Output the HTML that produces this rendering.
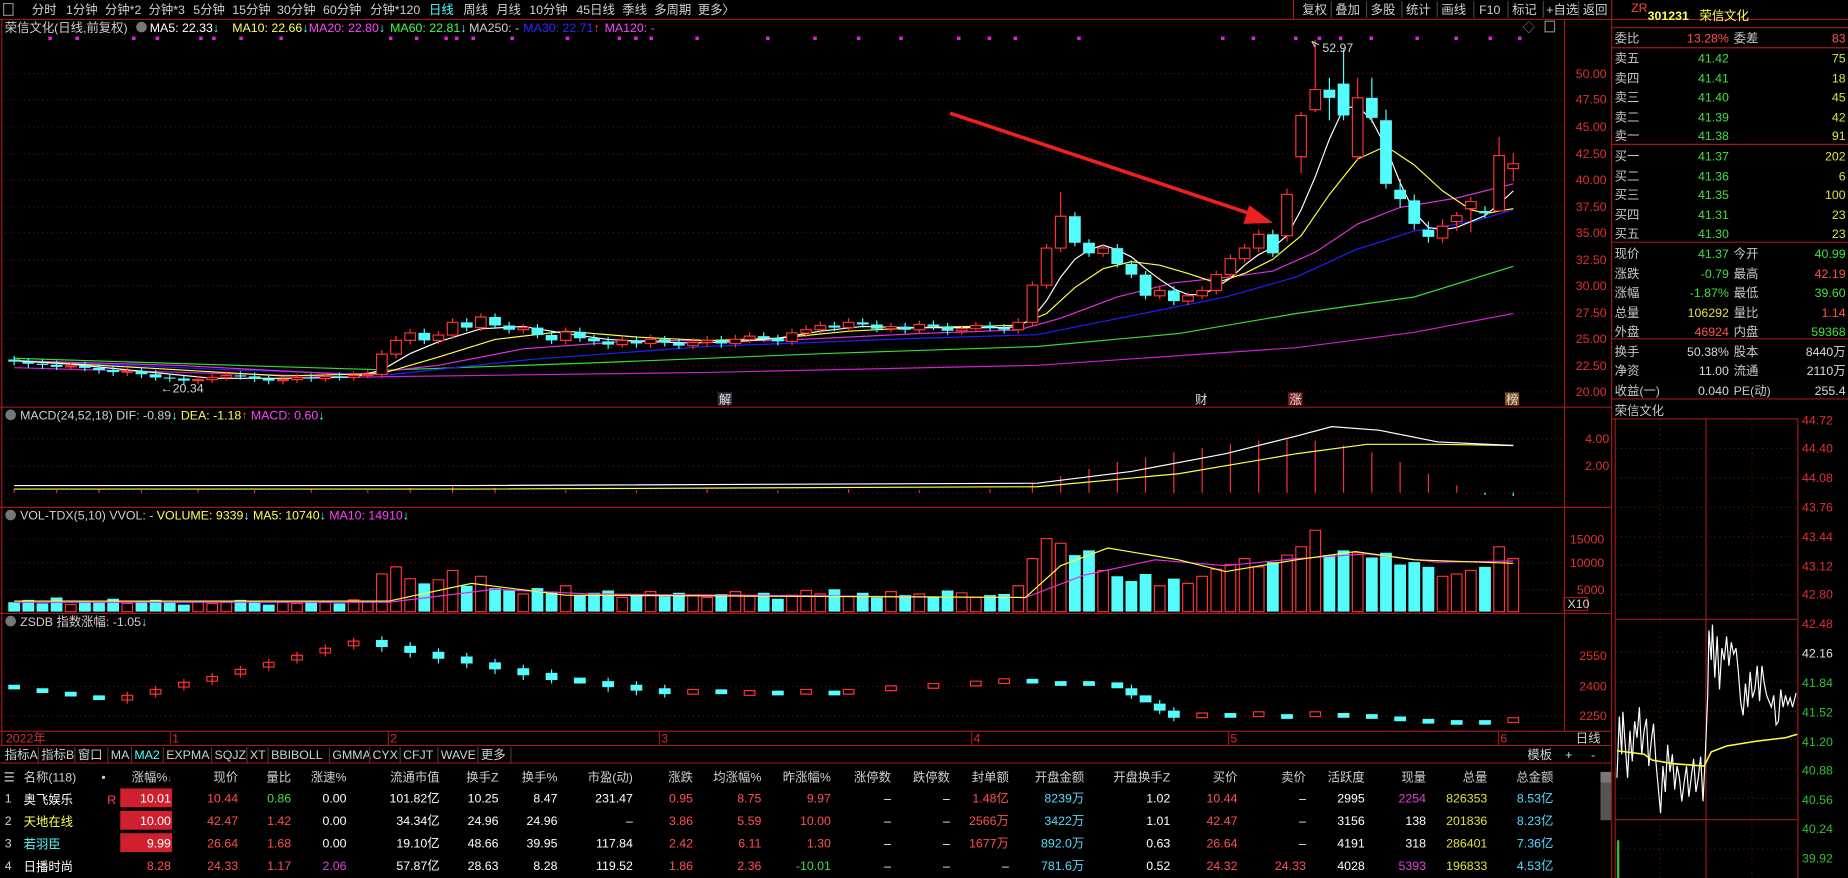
<!DOCTYPE html>
<html><head><meta charset="utf-8"><style>
html,body{margin:0;padding:0;background:#000;overflow:hidden}
svg{display:block}
text{font-family:"Liberation Sans","Noto Sans CJK SC",sans-serif;font-size:10.5px}
</style></head><body>
<svg width="1848" height="878" viewBox="0 0 1568 745" xmlns="http://www.w3.org/2000/svg">
<rect width="1568" height="745" fill="#000"/>
<!-- grids -->
<g stroke="#501010" stroke-dasharray="1,3">
<path d="M4 62.5H1326M4 84.5H1326M4 107.5H1326M4 130.5H1326M4 152.5H1326M4 175.5H1326M4 197.5H1326M4 220.5H1326M4 242.5H1326M4 265.5H1326M4 287.5H1326M4 310.5H1326M4 332.5H1326M4 372.5H1326M4 395.5H1326M4 418.5H1326M4 457.5H1326M4 477.5H1326M4 500.5H1326M4 556.5H1326M4 582.5H1326M4 607.5H1326"/>
<path d="M1371 380.5H1525M1371 405.5H1525M1371 430.5H1525M1371 455.5H1525M1371 479.5H1525M1371 504.5H1525M1371 553.5H1525M1371 578.5H1525M1371 603.5H1525M1371 627.5H1525M1371 652.5H1525M1371 677.5H1525M1371 720.5H1525M1408.5 356V745M1486.5 356V745"/>
</g>
<!-- frame lines -->
<g stroke="#a01818" stroke-width="1" fill="none">
<line x1="0" y1="16.5" x2="1568" y2="16.5"/>
<line x1="1.5" y1="17" x2="1.5" y2="632"/>
<line x1="0" y1="345.5" x2="1367" y2="345.5"/>
<line x1="0" y1="430.5" x2="1367" y2="430.5"/>
<line x1="0" y1="520.5" x2="1367" y2="520.5"/>
<line x1="0" y1="620.5" x2="1367" y2="620.5"/>
<line x1="0" y1="632.5" x2="1367" y2="632.5"/>
<line x1="0" y1="647.5" x2="1367" y2="647.5"/>
<line x1="1327.5" y1="17" x2="1327.5" y2="620"/>
<line x1="1367.5" y1="0" x2="1367.5" y2="745"/>
<line x1="1368" y1="23.5" x2="1568" y2="23.5"/>
<line x1="1368" y1="40.5" x2="1568" y2="40.5"/>
<line x1="1368" y1="122.5" x2="1568" y2="122.5"/>
<line x1="1368" y1="205.5" x2="1568" y2="205.5"/>
<line x1="1368" y1="287.5" x2="1568" y2="287.5"/>
<line x1="1368" y1="338.5" x2="1568" y2="338.5"/>
<line x1="1368" y1="355.5" x2="1525" y2="355.5"/>
<line x1="1370.5" y1="355" x2="1370.5" y2="745"/>
<line x1="1525.5" y1="355" x2="1525.5" y2="745"/>
<line x1="1447.5" y1="355" x2="1447.5" y2="745"/>
<line x1="1370" y1="525.5" x2="1525" y2="525.5"/>
<line x1="1370" y1="695.5" x2="1525" y2="695.5"/>
<line x1="1097.5" y1="0" x2="1097.5" y2="16"/>
</g>
<!-- magenta dots -->
<g fill="#e020e0"><rect x="41" y="31" width="3" height="3"/><rect x="64" y="31" width="3" height="3"/><rect x="112" y="31" width="3" height="3"/><rect x="132" y="31" width="3" height="3"/><rect x="169" y="31" width="3" height="3"/><rect x="180" y="31" width="3" height="3"/><rect x="203" y="31" width="3" height="3"/><rect x="237" y="31" width="3" height="3"/><rect x="330" y="31" width="3" height="3"/><rect x="352" y="31" width="3" height="3"/><rect x="377" y="31" width="3" height="3"/><rect x="386" y="31" width="3" height="3"/><rect x="400" y="31" width="3" height="3"/><rect x="433" y="31" width="3" height="3"/><rect x="480" y="31" width="3" height="3"/><rect x="524" y="31" width="3" height="3"/><rect x="538" y="31" width="3" height="3"/><rect x="551" y="31" width="3" height="3"/><rect x="590" y="31" width="3" height="3"/><rect x="650" y="31" width="3" height="3"/><rect x="690" y="31" width="3" height="3"/><rect x="727" y="31" width="3" height="3"/><rect x="763" y="31" width="3" height="3"/><rect x="812" y="31" width="3" height="3"/><rect x="838" y="31" width="3" height="3"/><rect x="860" y="31" width="3" height="3"/><rect x="914" y="31" width="3" height="3"/><rect x="1036" y="31" width="3" height="3"/><rect x="1062" y="31" width="3" height="3"/><rect x="1098" y="31" width="3" height="3"/><rect x="1118" y="31" width="3" height="3"/><rect x="1136" y="31" width="3" height="3"/><rect x="1162" y="31" width="3" height="3"/><rect x="1201" y="31" width="3" height="3"/><rect x="1234" y="31" width="3" height="3"/><rect x="1263" y="31" width="3" height="3"/><rect x="1288" y="31" width="3" height="3"/></g>
<!-- MA lines -->
<g fill="none" stroke-width="1">
<polyline stroke="#d020d0" points="12,312 300,320 600,316 880,310 1100,295 1200,282 1284,266"/>
<polyline stroke="#30e030" points="12,304 200,310 330,314 500,308 700,300 880,294 1000,283 1100,266 1200,252 1284,226"/>
<polyline stroke="#2020ff" points="12,306 200,314 330,318 450,305 600,294 780,287 880,284 960,268 1040,252 1100,235 1150,212 1200,196 1250,188 1284,178"/>
<polyline stroke="#e030e0" points="12,306 150,310 300,318 372,310 444,296 540,289 660,289 780,283 864,280 900,270 948,252 996,240 1044,235 1080,230 1116,214 1152,190 1188,176 1236,168 1284,156"/>
<polyline stroke="#ffff40" points="12,306 120,312 240,319 324,317 372,303 420,288 480,281 540,286 600,289 660,287 720,281 780,278 864,276 888,266 912,244 936,228 960,222 984,225 1008,232 1032,240 1056,232 1080,220 1104,200 1128,165 1152,135 1176,124 1200,140 1224,162 1248,178 1262,181 1284,177"/>
<polyline stroke="#ffffff" points="12,306 60,309 120,315 180,321 240,321 300,320 324,314 348,300 372,290 408,279 444,277 480,283 516,288 552,290 588,291 624,290 660,287 696,281 732,277 768,278 804,278 852,278 864,277 876,270 888,255 900,235 912,220 924,212 936,208 948,212 960,218 972,228 984,237 996,245 1008,250 1020,250 1032,244 1044,236 1056,225 1068,216 1080,210 1092,200 1104,178 1116,150 1128,118 1140,92 1152,90 1164,102 1176,125 1188,155 1200,180 1212,193 1224,195 1236,193 1248,188 1260,183 1272,173 1284,162"/>
</g>
<!-- candle wicks -->
<path stroke="#ff3232" fill="none" d="M60 307V314M108 312V319M168 319V326M180 317V325M192 315V323M240 319V326M252 317V325M276 316V324M300 315V323M312 314V321M324 297V321M336 285V304M348 279V292M372 281V292M384 270V287M408 266V281M444 275V283M480 278V292M528 285V295M552 284V295M588 287V296M600 285V294M624 284V295M636 282V291M672 279V293M684 276V286M696 273V283M720 270V281M756 274V282M780 272V283M816 276V284M828 273V282M864 270V283M876 239V277M888 207V245M900 163V214M936 207V218M984 243V254M1008 248V259M1020 243V254M1032 230V250M1044 216V236M1056 207V223M1068 195V214M1092 160V205M1104 95V147M1116 34V95M1152 66V136M1224 186V206M1236 180V196M1248 167V197M1272 116V180M1284 130V154"/>
<path stroke="#54fcfc" fill="none" d="M12 302V310M24 304V312M36 305V313M48 306V314M72 307V315M84 309V317M96 311V319M120 312V321M132 314V323M144 317V324M156 318V326M204 315V322M216 316V324M228 318V326M264 317V324M288 316V323M360 279V292M396 270V281M420 266V279M432 273V283M456 275V287M468 281V292M492 278V290M504 284V293M516 286V296M540 285V295M564 285V294M576 287V296M612 285V295M648 282V290M660 284V293M708 273V281M732 270V278M744 272V282M768 274V283M792 272V280M804 274V284M840 273V281M852 275V283M912 180V209M924 203V218M948 207V227M960 221V236M972 230V254M996 243V259M1080 195V218M1128 66V102M1140 42V102M1164 66V104M1176 93V160M1188 152V176M1200 165V195M1212 188V206M1260 175V185"/>
<!-- candle bodies -->
<path stroke="#ff3232" fill="#000" d="M55.5 310.4h9V311.3h-9ZM103.5 314.9h9V315.8h-9ZM163.5 322.1h9V323h-9ZM175.5 320.3h9V322.1h-9ZM187.5 318.5h9V320.3h-9ZM235.5 322.1h9V323h-9ZM247.5 320.3h9V322.1h-9ZM271.5 319.4h9V321.2h-9ZM295.5 318.5h9V320.3h-9ZM307.5 317.6h9V318.5h-9ZM319.5 300.5h9V317.6h-9ZM331.5 288.8h9V300.5h-9ZM343.5 282.5h9V288.8h-9ZM367.5 284.3h9V288.8h-9ZM379.5 273.5h9V284.3h-9ZM403.5 269h9V278h-9ZM439.5 278h9V279.8h-9ZM475.5 281.6h9V288.8h-9ZM523.5 288.8h9V292.4h-9ZM547.5 287.9h9V291.5h-9ZM583.5 290.6h9V293.3h-9ZM595.5 288.8h9V290.6h-9ZM619.5 287.9h9V291.5h-9ZM631.5 285.2h9V287.9h-9ZM667.5 282.5h9V289.7h-9ZM679.5 279.8h9V282.5h-9ZM691.5 276.2h9V279.8h-9ZM715.5 273.5h9V278h-9ZM751.5 277.1h9V278.9h-9ZM775.5 275.3h9V279.8h-9ZM811.5 278.9h9V280.7h-9ZM823.5 276.2h9V278.9h-9ZM859.5 273.5h9V279.8h-9ZM871.5 242h9V273.5h-9ZM883.5 210.5h9V242h-9ZM895.5 183.5h9V210.5h-9ZM931.5 210.5h9V215h-9ZM979.5 246.5h9V251h-9ZM1003.5 251h9V255.5h-9ZM1015.5 246.5h9V251h-9ZM1027.5 233h9V246.5h-9ZM1039.5 219.5h9V233h-9ZM1051.5 210.5h9V219.5h-9ZM1063.5 198.8h9V210.5h-9ZM1087.5 165h9V200h-9ZM1099.5 98h9V133h-9ZM1111.5 76h9V93h-9ZM1147.5 83h9V133h-9ZM1219.5 192h9V202h-9ZM1231.5 183h9V188h-9ZM1243.5 171h9V177h-9ZM1267.5 132h9V179h-9ZM1279.5 139h9V143h-9Z"/>
<path fill="#54fcfc" d="M7 305h10V306.8H7ZM19 306.8h10V308.6H19ZM31 308.6h10V309.6H31ZM43 309.5h10V311.3H43ZM67 310.4h10V312.2H67ZM79 312.2h10V314H79ZM91 314h10V315.8H91ZM115 314.9h10V317.6H115ZM127 317.6h10V320.3H127ZM139 320.3h10V321.3H139ZM151 321.2h10V323H151ZM199 318.5h10V319.5H199ZM211 319.4h10V321.2H211ZM223 321.2h10V323H223ZM259 320.3h10V321.3H259ZM283 319.4h10V320.4H283ZM355 282.5h10V288.8H355ZM391 273.5h10V278H391ZM415 269h10V276.2H415ZM427 276.2h10V279.8H427ZM451 278h10V284.3H451ZM463 284.3h10V288.8H463ZM487 281.6h10V287H487ZM499 287h10V289.7H499ZM511 289.7h10V292.4H511ZM535 288.8h10V291.5H535ZM559 287.9h10V290.6H559ZM571 290.6h10V293.3H571ZM607 288.8h10V291.5H607ZM643 285.2h10V287H643ZM655 287h10V289.7H655ZM703 276.2h10V278H703ZM727 273.5h10V275.3H727ZM739 275.3h10V278.9H739ZM763 277.1h10V279.8H763ZM787 275.3h10V277.1H787ZM799 277.1h10V280.7H799ZM835 276.2h10V278H835ZM847 278h10V279.8H847ZM907 183.5h10V206H907ZM919 206h10V215H919ZM943 210.5h10V224H943ZM955 224h10V233H955ZM967 233h10V251H967ZM991 246.5h10V255.5H991ZM1075 198.8h10V215H1075ZM1123 76h10V83H1123ZM1135 71h10V98H1135ZM1159 83h10V100H1159ZM1171 102h10V156H1171ZM1183 161h10V169H1183ZM1195 170h10V190H1195ZM1207 195h10V201H1207ZM1255 179h10V181H1255Z"/>
<!-- MACD -->
<path stroke="#ff3232" d="M12 418V415M48 418V416M84 418V415M120 418V416M168 418V415M216 418V416M264 418V415M312 418V416M348 418V414M384 418V413M420 418V414M480 418V416M540 418V416M600 418V415M660 418V416M720 418V415M780 418V416M840 418V415M876 418V410M900 418V404M924 418V398M948 418V392M972 418V388M996 418V384M1020 418V380M1044 418V377M1068 418V374M1092 418V373M1116 418V374M1140 418V378M1164 418V384M1188 418V392M1212 418V402M1236 418V412"/>
<path stroke="#54fcfc" d="M1260 418V420M1284 418V421"/>
<polyline fill="none" stroke="#ffff40" points="12,415 400,415 880,413 1000,402 1100,385 1160,377 1220,377 1284,378"/>
<polyline fill="none" stroke="#fff" points="12,412 400,412 880,410 960,400 1040,385 1100,370 1130,362 1170,365 1220,375 1284,378"/>
<!-- VOL -->
<path stroke="#ff3232" fill="#000" d="M55.5 513h9V519h-9ZM103.5 512h9V519h-9ZM163.5 510h9V519h-9ZM175.5 512h9V519h-9ZM187.5 511h9V519h-9ZM235.5 511h9V519h-9ZM247.5 512h9V519h-9ZM271.5 511h9V519h-9ZM295.5 509h9V519h-9ZM307.5 510h9V519h-9ZM319.5 487h9V519h-9ZM331.5 481h9V519h-9ZM343.5 491h9V519h-9ZM367.5 492h9V519h-9ZM379.5 484h9V519h-9ZM403.5 489h9V519h-9ZM439.5 504h9V519h-9ZM475.5 497h9V519h-9ZM523.5 507h9V519h-9ZM547.5 502h9V519h-9ZM583.5 505h9V519h-9ZM595.5 507h9V519h-9ZM619.5 502h9V519h-9ZM631.5 506h9V519h-9ZM667.5 505h9V519h-9ZM679.5 501h9V519h-9ZM691.5 504h9V519h-9ZM715.5 506h9V519h-9ZM751.5 502h9V519h-9ZM775.5 504h9V519h-9ZM811.5 503h9V519h-9ZM823.5 507h9V519h-9ZM859.5 497h9V519h-9ZM871.5 474h9V519h-9ZM883.5 457h9V519h-9ZM895.5 461h9V519h-9ZM931.5 484h9V519h-9ZM979.5 497h9V519h-9ZM1003.5 495h9V519h-9ZM1015.5 489h9V519h-9ZM1027.5 483h9V519h-9ZM1039.5 479h9V519h-9ZM1051.5 474h9V519h-9ZM1063.5 481h9V519h-9ZM1087.5 471h9V519h-9ZM1099.5 464h9V519h-9ZM1111.5 450h9V519h-9ZM1147.5 469h9V519h-9ZM1219.5 489h9V519h-9ZM1231.5 487h9V519h-9ZM1243.5 484h9V519h-9ZM1267.5 464h9V519h-9ZM1279.5 474h9V519h-9Z"/>
<path fill="#54fcfc" d="M7 511h10V519H7ZM19 509h10V519H19ZM31 512h10V519H31ZM43 507h10V519H43ZM67 510h10V519H67ZM79 511h10V519H79ZM91 508h10V519H91ZM115 510h10V519H115ZM127 509h10V519H127ZM139 511h10V519H139ZM151 513h10V519H151ZM199 509h10V519H199ZM211 510h10V519H211ZM223 513h10V519H223ZM259 510h10V519H259ZM283 512h10V519H283ZM355 495h10V519H355ZM391 497h10V519H391ZM415 499h10V519H415ZM427 501h10V519H427ZM451 499h10V519H451ZM463 502h10V519H463ZM487 505h10V519H487ZM499 503h10V519H499ZM511 501h10V519H511ZM535 504h10V519H535ZM559 506h10V519H559ZM571 503h10V519H571ZM607 504h10V519H607ZM643 503h10V519H643ZM655 508h10V519H655ZM703 500h10V519H703ZM727 503h10V519H727ZM739 507h10V519H739ZM763 505h10V519H763ZM787 506h10V519H787ZM799 501h10V519H799ZM835 505h10V519H835ZM847 504h10V519H847ZM907 471h10V519H907ZM919 467h10V519H919ZM943 489h10V519H943ZM955 493h10V519H955ZM967 487h10V519H967ZM991 491h10V519H991ZM1075 477h10V519H1075ZM1123 471h10V519H1123ZM1135 467h10V519H1135ZM1159 473h10V519H1159ZM1171 469h10V519H1171ZM1183 479h10V519H1183ZM1195 477h10V519H1195ZM1207 481h10V519H1207ZM1255 481h10V519H1255Z"/>
<polyline fill="none" stroke="#e030e0" points="12,511 330,511 420,500 500,504 870,507 920,488 980,475 1040,480 1100,474 1160,470 1220,477 1284,476"/>
<polyline fill="none" stroke="#ffff40" points="12,510 330,510 400,495 480,505 870,507 900,480 940,465 1000,475 1040,485 1100,475 1150,468 1200,475 1284,478"/>
<!-- ZSDB -->
<path stroke="#ff3232" fill="#000" d="M103.5 590h9v4h-9ZM127.5 585h9v4h-9ZM151.5 579h9v4h-9ZM175.5 574h9v4h-9ZM199.5 568h9v4h-9ZM223.5 562h9v4h-9ZM247.5 556h9v4h-9ZM271.5 550h9v4h-9ZM295.5 544h9v4h-9ZM583.5 585h9v4h-9ZM631.5 586h9v4h-9ZM679.5 585h9v4h-9ZM715.5 585h9v4h-9ZM751.5 582h9v4h-9ZM787.5 580h9v4h-9ZM823.5 578h9v4h-9ZM847.5 576h9v4h-9ZM1015.5 605h9v4h-9ZM1063.5 604h9v4h-9ZM1111.5 604h9v4h-9ZM1279.5 609h9v4h-9Z"/>
<path stroke="#ff3232" d="M108 587V597M132 582V592M156 576V586M180 571V581M204 565V575M228 559V569M252 553V563M276 547V557M300 541V551"/>
<path fill="#54fcfc" d="M7 581h10v4H7ZM31 584h10v4H31ZM55 587h10v4H55ZM79 590h10v4H79ZM319 543h10v6H319ZM343 548h10v6H343ZM367 553h10v6H367ZM391 557h10v6H391ZM415 562h10v6H415ZM439 567h10v6H439ZM463 571h10v6H463ZM487 575h10v5H487ZM511 578h10v5H511ZM535 581h10v5H535ZM559 584h10v5H559ZM607 585h10v4H607ZM655 586h10v4H655ZM703 586h10v4H703ZM871 576h10v4H871ZM895 578h10v4H895ZM919 578h10v4H919ZM943 579h10v5H943ZM955 584h10v6H955ZM967 590h10v6H967ZM979 597h10v6H979ZM991 603h10v6H991ZM1039 605h10v4H1039ZM1087 606h10v4H1087ZM1135 605h10v4H1135ZM1159 606h10v4H1159ZM1183 608h10v4H1183ZM1207 610h10v4H1207ZM1231 611h10v4H1231ZM1255 611h10v4H1255Z"/>
<path stroke="#54fcfc" d="M324 540V553M348 545V558M372 550V563M396 554V567M420 559V572M444 564V577M468 568V580M516 575V587M540 578V590M564 581V592M960 581V593M984 594V606M996 600V612"/>
<!-- intraday -->
<polyline fill="none" stroke="#fff" points="1372,660 1374,608 1376,640 1377,604 1379,632 1381,660 1383,620 1385,646 1387,612 1389,626 1391,600 1393,640 1395,620 1397,610 1399,650 1401,630 1403,614 1405,646 1407,668 1409,690 1411,650 1413,672 1415,632 1417,655 1419,640 1421,670 1423,650 1425,660 1427,680 1429,664 1431,650 1433,676 1435,660 1437,644 1439,672 1441,660 1443,642 1445,680 1446,660 1447,640 1449,590 1450,535 1452,560 1453,530 1455,575 1457,540 1459,585 1461,550 1463,560 1465,540 1467,565 1469,545 1471,555 1473,550 1475,570 1477,596 1479,607 1481,580 1483,600 1485,570 1487,592 1489,585 1491,565 1493,595 1495,565 1497,580 1499,590 1501,595 1503,600 1505,590 1507,615 1509,612 1511,585 1513,600 1515,590 1517,598 1519,592 1521,600 1524,588"/>
<polyline fill="none" stroke="#ffff40" stroke-width="1.3" points="1372,637 1395,640 1402,645 1420,648 1446,650 1452,638 1465,633 1490,629 1515,626 1525,623"/>
<line x1="1373" x2="1373" y1="713" y2="745" stroke="#30c030" stroke-width="2"/>
<!-- toolbar -->
<rect x="3" y="3" width="8" height="10" fill="none" stroke="#888"/>
<g fill="#d0d0d0">
<text x="27" y="12">分时</text><text x="56" y="12">1分钟</text><text x="89" y="12">分钟*2</text><text x="126" y="12">分钟*3</text><text x="164" y="12">5分钟</text><text x="197" y="12">15分钟</text><text x="235" y="12">30分钟</text><text x="274" y="12">60分钟</text><text x="314" y="12">分钟*120</text><text x="364" y="12" fill="#55ffff">日线</text><text x="393" y="12">周线</text><text x="421" y="12">月线</text><text x="449" y="12">10分钟</text><text x="489" y="12">45日线</text><text x="528" y="12">季线</text><text x="555" y="12">多周期</text><text x="592" y="12">更多〉</text>
<text x="1105" y="12">复权</text><text x="1133" y="12">叠加</text><text x="1163" y="12">多股</text><text x="1193" y="12">统计</text><text x="1223" y="12">画线</text><text x="1255" y="12">F10</text><text x="1283" y="12">标记</text><text x="1312" y="12">+自选</text><text x="1343" y="12">返回</text>
</g>
<g stroke="#444"><line x1="1129.5" y1="1" x2="1129.5" y2="15"/><line x1="1159.5" y1="1" x2="1159.5" y2="15"/><line x1="1189.5" y1="1" x2="1189.5" y2="15"/><line x1="1219.5" y1="1" x2="1219.5" y2="15"/><line x1="1250.5" y1="1" x2="1250.5" y2="15"/><line x1="1279.5" y1="1" x2="1279.5" y2="15"/><line x1="1309.5" y1="1" x2="1309.5" y2="15"/><line x1="1339.5" y1="1" x2="1339.5" y2="15"/></g>
<!-- legend -->
<text x="4" y="27" fill="#d0d0d0">荣信文化(日线,前复权)</text>
<circle cx="120" cy="23" r="4.5" fill="#777"/>
<text x="127" y="27" fill="#fff">MA5: 22.33<tspan fill="#55ffff">↓</tspan></text>
<text x="197" y="27" fill="#ffff55">MA10: 22.66<tspan fill="#55ffff">↓</tspan></text>
<text x="262" y="27" fill="#ff44ff">MA20: 22.80<tspan fill="#55ffff">↓</tspan></text>
<text x="331" y="27" fill="#44ff44">MA60: 22.81<tspan fill="#55ffff">↓</tspan></text>
<text x="398" y="27" fill="#d0d0d0">MA250: -</text>
<text x="444" y="27" fill="#2a2aff">MA30: 22.71<tspan fill="#ff4444">↑</tspan></text>
<text x="513" y="27" fill="#ff44ff">MA120: -</text>
<text x="1292" y="27" fill="#888" font-size="12">◇</text>
<rect x="1311" y="18" width="8" height="9" fill="none" stroke="#888"/>
<!-- price axis -->
<g fill="#e03030" font-size="11">
<text x="1337" y="66">50.00</text><text x="1337" y="88">47.50</text><text x="1337" y="111">45.00</text><text x="1337" y="134">42.50</text><text x="1337" y="156">40.00</text><text x="1337" y="179">37.50</text><text x="1337" y="201">35.00</text><text x="1337" y="224">32.50</text><text x="1337" y="246">30.00</text><text x="1337" y="269">27.50</text><text x="1337" y="291">25.00</text><text x="1337" y="314">22.50</text><text x="1337" y="336">20.00</text>
<text x="1345" y="376">4.00</text><text x="1345" y="399">2.00</text>
<text x="1332" y="461">15000</text><text x="1332" y="481">10000</text><text x="1338" y="504">5000</text>
<text x="1340" y="560">2550</text><text x="1340" y="586">2400</text><text x="1340" y="611">2250</text>
</g>
<rect x="1327" y="507" width="20" height="11" fill="none" stroke="#a01818"/><text x="1330" y="516" fill="#d0d0d0" font-size="9.5">X10</text>
<text x="1122" y="44" fill="#d0d0d0" font-size="10.5">52.97</text>
<path d="M1113 35 l6 3 M1113 35 l3 5" stroke="#ccc" fill="none"/>
<text x="136" y="333" fill="#d0d0d0" font-size="10.5">←20.34</text>
<rect x="609" y="333" width="12" height="11" fill="#303040"/><text x="610" y="343" fill="#ddd" font-size="10">解</text>
<text x="1014" y="343" fill="#ddd" font-size="10">财</text>
<rect x="1093" y="333" width="12" height="11" fill="#802020"/><text x="1094" y="343" fill="#ddd" font-size="10">涨</text>
<rect x="1277" y="333" width="12" height="11" fill="#805020"/><text x="1278" y="343" fill="#ddd" font-size="10">榜</text>
<!-- sub legends -->
<circle cx="9" cy="352" r="4.5" fill="#777"/>
<text x="17" y="356" fill="#d0d0d0">MACD(24,52,18) DIF: -0.89<tspan fill="#55ffff">↓</tspan> <tspan fill="#ffff55">DEA: -1.18</tspan><tspan fill="#ff4444">↑</tspan> <tspan fill="#ff44ff">MACD: 0.60</tspan><tspan fill="#55ffff">↓</tspan></text>
<circle cx="9" cy="437" r="4.5" fill="#777"/>
<text x="17" y="441" fill="#d0d0d0">VOL-TDX(5,10) VVOL: - <tspan fill="#ffff55">VOLUME: 9339</tspan><tspan fill="#55ffff">↓</tspan> <tspan fill="#ffff55">MA5: 10740</tspan><tspan fill="#55ffff">↓</tspan> <tspan fill="#ff44ff">MA10: 14910</tspan><tspan fill="#55ffff">↓</tspan></text>
<circle cx="9" cy="527" r="4.5" fill="#777"/>
<text x="17" y="531" fill="#d0d0d0">ZSDB 指数涨幅: -1.05<tspan fill="#55ffff">↓</tspan></text>
<!-- date axis -->
<g fill="#d03030" font-size="10.5"><text x="5" y="630">2022年</text><text x="146" y="630">1</text><text x="331" y="630">2</text><text x="561" y="630">3</text><text x="826" y="630">4</text><text x="1044" y="630">5</text><text x="1273" y="630">6</text></g>
<g stroke="#a01818"><line x1="144.5" y1="621" x2="144.5" y2="632"/><line x1="329.5" y1="621" x2="329.5" y2="632"/><line x1="559.5" y1="621" x2="559.5" y2="632"/><line x1="824.5" y1="621" x2="824.5" y2="632"/><line x1="1042.5" y1="621" x2="1042.5" y2="632"/><line x1="1271.5" y1="621" x2="1271.5" y2="632"/></g>
<text x="1337" y="630" fill="#d0d0d0" font-size="10.5">日线</text>
<!-- indicator tabs -->
<g fill="#d0d0d0" font-size="10"><text x="4" y="644">指标A</text><text x="35" y="644">指标B</text><text x="66" y="644">窗口</text><text x="94" y="644">MA</text><text x="114" y="644" fill="#55ffff">MA2</text><text x="141" y="644">EXPMA</text><text x="182" y="644">SQJZ</text><text x="212" y="644">XT</text><text x="230" y="644">BBIBOLL</text><text x="282" y="644">GMMA</text><text x="316" y="644">CYX</text><text x="342" y="644">CFJT</text><text x="374" y="644">WAVE</text><text x="408" y="644">更多</text><text x="1296" y="644">模板</text><text x="1328" y="644">+</text><text x="1350" y="644">-</text></g>
<g stroke="#553333"><line x1="32.5" y1="634" x2="32.5" y2="647"/><line x1="63.5" y1="634" x2="63.5" y2="647"/><line x1="91.5" y1="634" x2="91.5" y2="647"/><line x1="111.5" y1="634" x2="111.5" y2="647"/><line x1="138.5" y1="634" x2="138.5" y2="647"/><line x1="179.5" y1="634" x2="179.5" y2="647"/><line x1="209.5" y1="634" x2="209.5" y2="647"/><line x1="227.5" y1="634" x2="227.5" y2="647"/><line x1="279.5" y1="634" x2="279.5" y2="647"/><line x1="313.5" y1="634" x2="313.5" y2="647"/><line x1="339.5" y1="634" x2="339.5" y2="647"/><line x1="371.5" y1="634" x2="371.5" y2="647"/><line x1="405.5" y1="634" x2="405.5" y2="647"/><line x1="433.5" y1="634" x2="433.5" y2="647"/></g>
<!-- table -->
<g font-size="11.5" fill="#d0d0d0">
<text x="3" y="663">☰</text><text x="20" y="663">名称(118)</text><text x="86" y="663">•</text>
<g text-anchor="end">
<text x="146" y="663">涨幅%<tspan fill="#ff4444" font-size="8">↓</tspan></text><text x="202" y="663">现价</text><text x="247" y="663">量比</text><text x="294" y="663">涨速%</text><text x="373" y="663">流通市值</text><text x="423" y="663">换手Z</text><text x="473" y="663">换手%</text><text x="537" y="663">市盈(动)</text><text x="588" y="663">涨跌</text><text x="646" y="663">均涨幅%</text><text x="705" y="663">昨涨幅%</text><text x="756" y="663">涨停数</text><text x="806" y="663">跌停数</text><text x="856" y="663">封单额</text><text x="920" y="663">开盘金额</text><text x="993" y="663">开盘换手Z</text><text x="1050" y="663">买价</text><text x="1108" y="663">卖价</text><text x="1158" y="663">活跃度</text><text x="1210" y="663">现量</text><text x="1262" y="663">总量</text><text x="1318" y="663">总金额</text>
</g>
</g>
<rect x="1358" y="655" width="9" height="41" fill="#555"/>
<rect x="1358" y="655" width="9" height="9" fill="#777"/>
<rect x="102" y="669" width="44" height="16" fill="#d02030"/>
<rect x="102" y="688" width="44" height="16" fill="#d02030"/>
<rect x="102" y="707" width="44" height="16" fill="#d02030"/>
<g font-size="12">
<text x="4" y="681" fill="#d0d0d0">1</text><text x="20" y="682" fill="#fff" font-size="13.5">奥飞娱乐</text><text x="91" y="682" fill="#ff4444" font-size="9">R</text>
<text x="4" y="700" fill="#d0d0d0">2</text><text x="20" y="701" fill="#ffff55" font-size="13.5">天地在线</text>
<text x="4" y="719" fill="#d0d0d0">3</text><text x="20" y="720" fill="#55ffff" font-size="13.5">若羽臣</text>
<text x="4" y="738" fill="#d0d0d0">4</text><text x="20" y="739" fill="#fff" font-size="13.5">日播时尚</text>
<g text-anchor="end">
<text x="145" y="681" fill="#fff">10.01</text><text x="202" y="681" fill="#ff5050">10.44</text><text x="247" y="681" fill="#40e040">0.86</text><text x="294" y="681" fill="#fff">0.00</text><text x="373" y="681" fill="#fff">101.82亿</text><text x="423" y="681" fill="#fff">10.25</text><text x="473" y="681" fill="#fff">8.47</text><text x="537" y="681" fill="#fff">231.47</text><text x="588" y="681" fill="#ff5050">0.95</text><text x="646" y="681" fill="#ff5050">8.75</text><text x="705" y="681" fill="#ff5050">9.97</text><text x="756" y="681" fill="#fff">–</text><text x="806" y="681" fill="#fff">–</text><text x="856" y="681" fill="#ff5050">1.48亿</text><text x="920" y="681" fill="#55ddff">8239万</text><text x="993" y="681" fill="#fff">1.02</text><text x="1050" y="681" fill="#ff5050">10.44</text><text x="1108" y="681" fill="#fff">–</text><text x="1158" y="681" fill="#fff">2995</text><text x="1210" y="681" fill="#e040e0">2254</text><text x="1262" y="681" fill="#e0e040">826353</text><text x="1318" y="681" fill="#55ddff">8.53亿</text>
<text x="145" y="700" fill="#fff">10.00</text><text x="202" y="700" fill="#ff5050">42.47</text><text x="247" y="700" fill="#ff5050">1.42</text><text x="294" y="700" fill="#fff">0.00</text><text x="373" y="700" fill="#fff">34.34亿</text><text x="423" y="700" fill="#fff">24.96</text><text x="473" y="700" fill="#fff">24.96</text><text x="537" y="700" fill="#fff">–</text><text x="588" y="700" fill="#ff5050">3.86</text><text x="646" y="700" fill="#ff5050">5.59</text><text x="705" y="700" fill="#ff5050">10.00</text><text x="756" y="700" fill="#fff">–</text><text x="806" y="700" fill="#fff">–</text><text x="856" y="700" fill="#ff5050">2566万</text><text x="920" y="700" fill="#55ddff">3422万</text><text x="993" y="700" fill="#fff">1.01</text><text x="1050" y="700" fill="#ff5050">42.47</text><text x="1108" y="700" fill="#fff">–</text><text x="1158" y="700" fill="#fff">3156</text><text x="1210" y="700" fill="#fff">138</text><text x="1262" y="700" fill="#e0e040">201836</text><text x="1318" y="700" fill="#55ddff">8.23亿</text>
<text x="145" y="719" fill="#fff">9.99</text><text x="202" y="719" fill="#ff5050">26.64</text><text x="247" y="719" fill="#ff5050">1.68</text><text x="294" y="719" fill="#fff">0.00</text><text x="373" y="719" fill="#fff">19.10亿</text><text x="423" y="719" fill="#fff">48.66</text><text x="473" y="719" fill="#fff">39.95</text><text x="537" y="719" fill="#fff">117.84</text><text x="588" y="719" fill="#ff5050">2.42</text><text x="646" y="719" fill="#ff5050">6.11</text><text x="705" y="719" fill="#ff5050">1.30</text><text x="756" y="719" fill="#fff">–</text><text x="806" y="719" fill="#fff">–</text><text x="856" y="719" fill="#ff5050">1677万</text><text x="920" y="719" fill="#55ddff">892.0万</text><text x="993" y="719" fill="#fff">0.63</text><text x="1050" y="719" fill="#ff5050">26.64</text><text x="1108" y="719" fill="#fff">–</text><text x="1158" y="719" fill="#fff">4191</text><text x="1210" y="719" fill="#fff">318</text><text x="1262" y="719" fill="#e0e040">286401</text><text x="1318" y="719" fill="#55ddff">7.36亿</text>
<text x="145" y="738" fill="#ff5050">8.28</text><text x="202" y="738" fill="#ff5050">24.33</text><text x="247" y="738" fill="#ff5050">1.17</text><text x="294" y="738" fill="#e040e0">2.06</text><text x="373" y="738" fill="#fff">57.87亿</text><text x="423" y="738" fill="#fff">28.63</text><text x="473" y="738" fill="#fff">8.28</text><text x="537" y="738" fill="#fff">119.52</text><text x="588" y="738" fill="#ff5050">1.86</text><text x="646" y="738" fill="#ff5050">2.36</text><text x="705" y="738" fill="#40e040">-10.01</text><text x="756" y="738" fill="#fff">–</text><text x="806" y="738" fill="#fff">–</text><text x="856" y="738" fill="#fff">–</text><text x="920" y="738" fill="#55ddff">781.6万</text><text x="993" y="738" fill="#fff">0.52</text><text x="1050" y="738" fill="#ff5050">24.32</text><text x="1108" y="738" fill="#ff5050">24.33</text><text x="1158" y="738" fill="#fff">4028</text><text x="1210" y="738" fill="#e040e0">5393</text><text x="1262" y="738" fill="#e0e040">196833</text><text x="1318" y="738" fill="#55ddff">4.53亿</text>
</g></g>
<!-- right panel -->
<text x="1384" y="10" fill="#ff4444" font-size="7">ZR</text>
<text x="1398" y="17" fill="#ffff55" font-size="12.5" font-weight="bold">301231</text>
<text x="1442" y="17" fill="#ffff55" font-size="13">荣信文化</text>
<g font-size="13">
<g fill="#c8c8c8"><text x="1370" y="36">委比</text><text x="1471" y="36">委差</text>
<text x="1370" y="53">卖五</text><text x="1370" y="70">卖四</text><text x="1370" y="86">卖三</text><text x="1370" y="103">卖二</text><text x="1370" y="119">卖一</text>
<text x="1370" y="136">买一</text><text x="1370" y="153">买二</text><text x="1370" y="169">买三</text><text x="1370" y="186">买四</text><text x="1370" y="202">买五</text>
<text x="1370" y="219">现价</text><text x="1471" y="219">今开</text><text x="1370" y="236">涨跌</text><text x="1471" y="236">最高</text><text x="1370" y="252">涨幅</text><text x="1471" y="252">最低</text><text x="1370" y="269">总量</text><text x="1471" y="269">量比</text><text x="1370" y="285">外盘</text><text x="1471" y="285">内盘</text>
<text x="1370" y="302">换手</text><text x="1471" y="302">股本</text><text x="1370" y="318">净资</text><text x="1471" y="318">流通</text><text x="1370" y="335">收益(一)</text><text x="1471" y="335">PE(动)</text>
<text x="1370" y="352" font-size="11.5">荣信文化</text></g>
<g text-anchor="end" font-size="12">
<text x="1467" y="36" fill="#ff5050">13.28%</text><text x="1566" y="36" fill="#ff5050">83</text>
<g fill="#40e040"><text x="1467" y="53">41.42</text><text x="1467" y="70">41.41</text><text x="1467" y="86">41.40</text><text x="1467" y="103">41.39</text><text x="1467" y="119">41.38</text><text x="1467" y="136">41.37</text><text x="1467" y="153">41.36</text><text x="1467" y="169">41.35</text><text x="1467" y="186">41.31</text><text x="1467" y="202">41.30</text>
<text x="1467" y="219">41.37</text><text x="1566" y="219">40.99</text><text x="1467" y="236">-0.79</text><text x="1467" y="252">-1.87%</text><text x="1566" y="252">39.60</text><text x="1566" y="285">59368</text></g>
<g fill="#e0e040"><text x="1566" y="53">75</text><text x="1566" y="70">18</text><text x="1566" y="86">45</text><text x="1566" y="103">42</text><text x="1566" y="119">91</text><text x="1566" y="136">202</text><text x="1566" y="153">6</text><text x="1566" y="169">100</text><text x="1566" y="186">23</text><text x="1566" y="202">23</text><text x="1467" y="269">106292</text></g>
<text x="1566" y="236" fill="#ff5050">42.19</text><text x="1566" y="269" fill="#ff5050">1.14</text><text x="1467" y="285" fill="#ff5050">46924</text>
<g fill="#d8d8d8"><text x="1467" y="302">50.38%</text><text x="1566" y="302">8440万</text><text x="1467" y="318">11.00</text><text x="1566" y="318">2110万</text><text x="1467" y="335">0.040</text><text x="1566" y="335">255.4</text></g>
</g></g>
<g font-size="11">
<g fill="#e03030"><text x="1529" y="360">44.72</text><text x="1529" y="384">44.40</text><text x="1529" y="409">44.08</text><text x="1529" y="434">43.76</text><text x="1529" y="459">43.44</text><text x="1529" y="484">43.12</text><text x="1529" y="508">42.80</text><text x="1529" y="533">42.48</text></g>
<text x="1529" y="558" fill="#e0e0e0">42.16</text>
<g fill="#30c030"><text x="1529" y="583">41.84</text><text x="1529" y="608">41.52</text><text x="1529" y="633">41.20</text><text x="1529" y="657">40.88</text><text x="1529" y="682">40.56</text><text x="1529" y="707">40.24</text><text x="1529" y="732">39.92</text></g>
</g>
<!-- arrow -->
<line x1="806" y1="96" x2="1066" y2="183" stroke="#ee2020" stroke-width="3"/>
<polygon points="1080,189 1060,174 1055,190" fill="#ee2020"/>
</svg>
</body></html>
